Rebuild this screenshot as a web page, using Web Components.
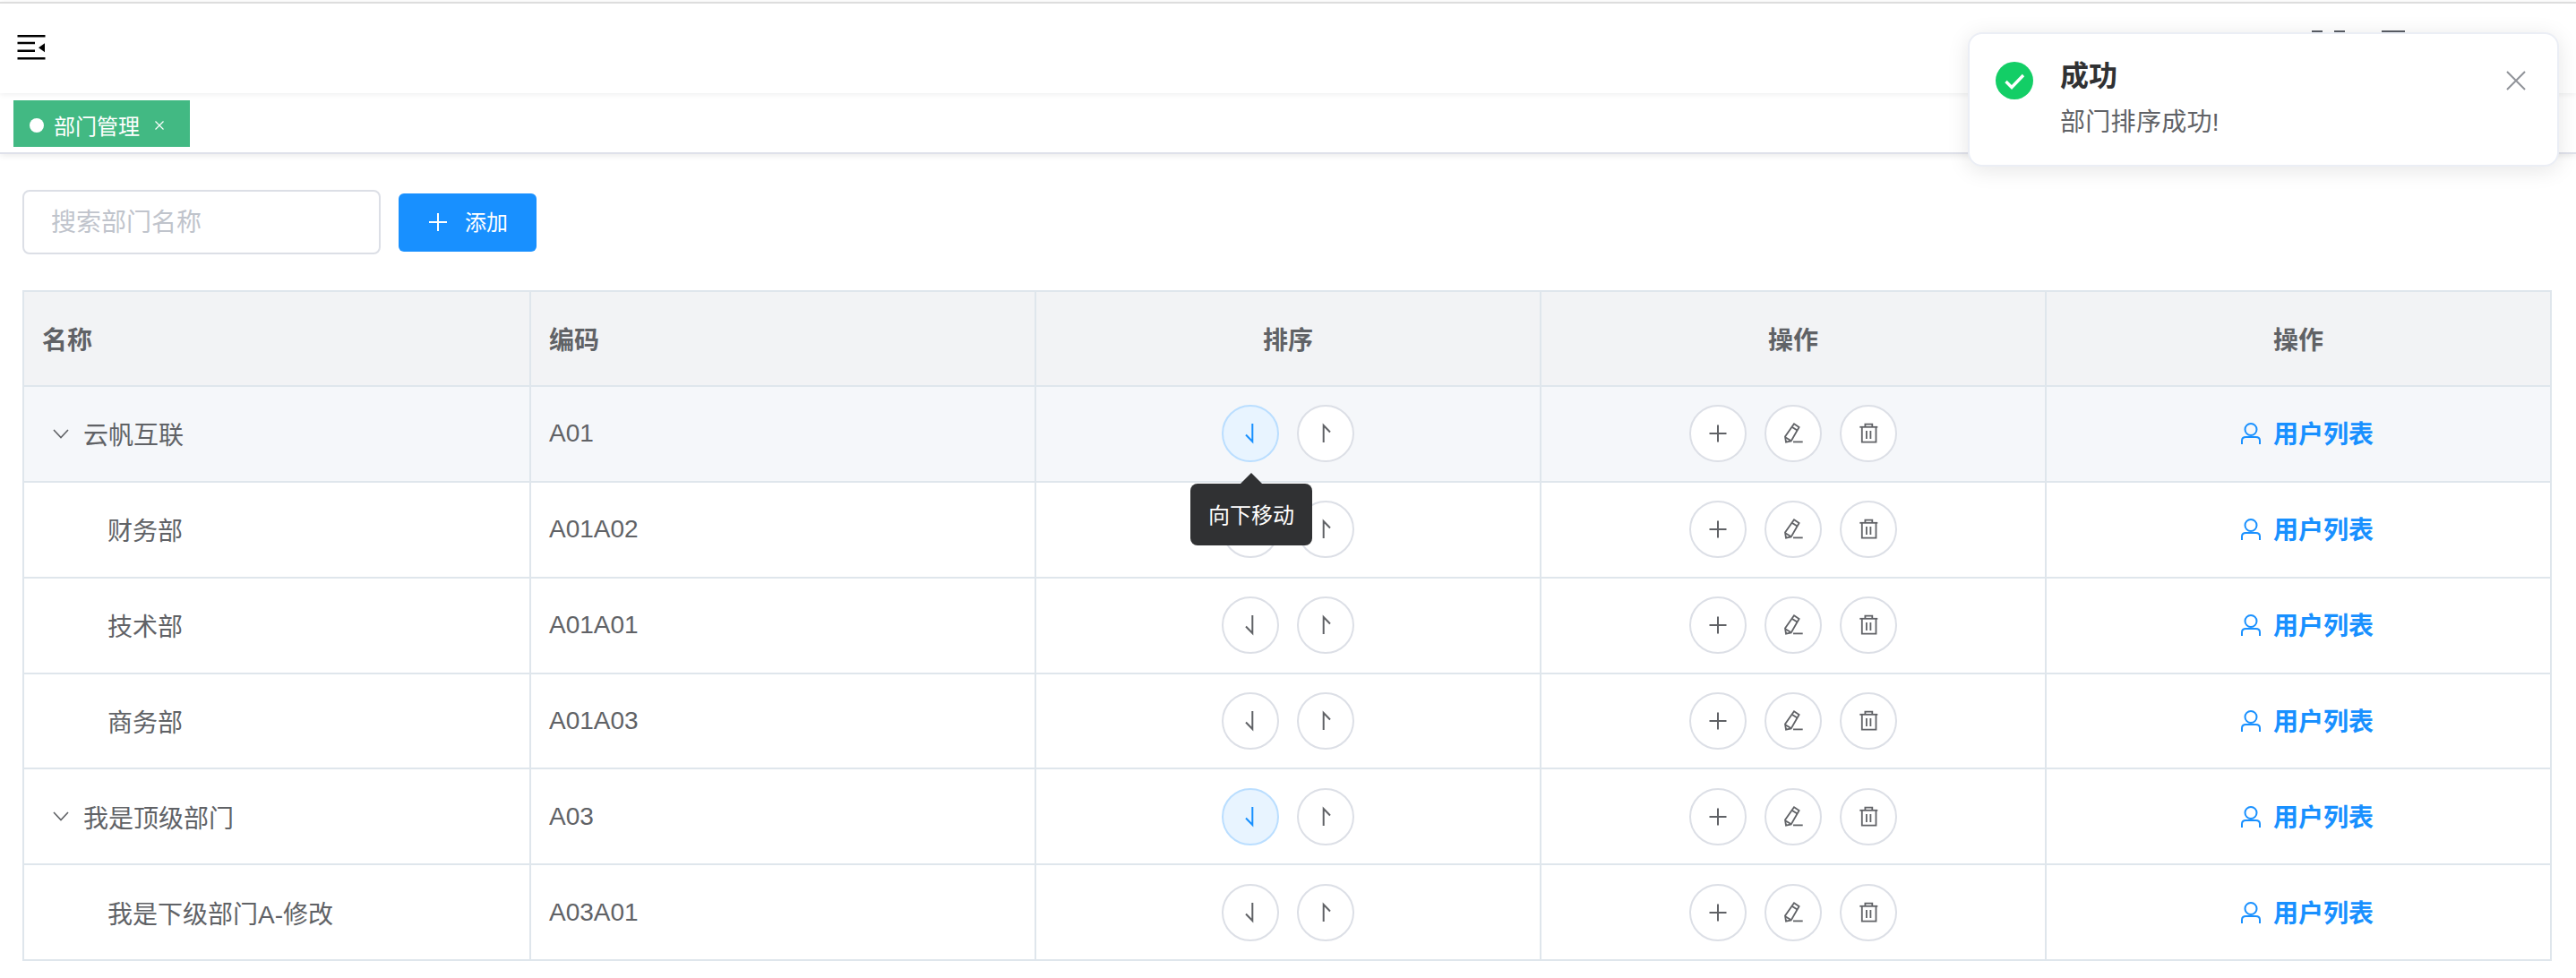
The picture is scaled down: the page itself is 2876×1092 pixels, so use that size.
<!DOCTYPE html>
<html lang="zh"><head><meta charset="utf-8"><style>
html,body{margin:0;padding:0;background:#fff}
body{width:2876px;height:1092px;overflow:hidden;position:relative;font-family:"Liberation Sans","Noto Sans CJK SC",sans-serif;color:#606266;font-size:28px}
</style></head><body>
<app-nav></app-nav>
<app-tags></app-tags>
<app-main></app-main>
<app-tooltip>向下移动</app-tooltip>
<app-notify title-text="成功" message="部门排序成功!"></app-notify>
<script>
const ICONS={
 down:'<path d="M18.3 5V25L11 17.5" fill="none" stroke="currentColor" stroke-width="2"/>',
 up:'<path d="M13.7 26V7L21 14.5" fill="none" stroke="currentColor" stroke-width="2"/>',
 plus:'<path d="M16 6.5V25.5M6.5 16H25.5" fill="none" stroke="currentColor" stroke-width="2"/>',
 edit:'<g fill="none" stroke="currentColor" stroke-width="1.8"><path d="M17 5.3L22.6 9L13.7 24.5L8 25.6L7 19.5Z"/><path d="M15 9L20.5 12.6"/><path d="M7.6 20.4L13.4 24"/><path d="M16 25.4H26.7"/></g>',
 del:'<g fill="none" stroke="currentColor" stroke-width="1.8"><path d="M6.3 8.8H26.3"/><path d="M12.4 8.8V5.6H20.3V8.8"/><path d="M8.8 8.8V25.6H24.5V8.8"/><path d="M13.9 13V22M18.4 13V22"/></g>'
};
class AppNav extends HTMLElement{constructor(){super();this.attachShadow({mode:'open'}).innerHTML=`<style>
:host{display:flex;align-items:center;height:100px;border-top:2px solid #ddd;margin-top:2px;padding-left:19px;background:#fff;position:relative;z-index:1;box-shadow:0 1px 6px rgba(0,21,41,.08)}
svg{display:block;margin-top:-2px}
.r{margin-left:auto;display:flex;margin-right:191px;align-self:flex-start;padding-top:30px}
.r span{display:block;height:2px;background:#5a5e66}
</style><svg width="32" height="28" viewBox="0 0 32 28"><path d="M0.5 1.2H31.5M0.5 9H20M0.5 17.8H20M0.5 26.2H31.5" stroke="#000" stroke-width="2.4" fill="none"/><path d="M31 9.3V19.3L24 14.3Z" fill="#000"/></svg><div class="r"><span style="width:12px;margin-right:13px"></span><span style="width:12px;margin-right:41px"></span><span style="width:26px"></span></div>`}}
customElements.define('app-nav',AppNav);
class AppTags extends HTMLElement{constructor(){super();this.attachShadow({mode:'open'}).innerHTML=`<style>
:host{display:flex;align-items:flex-start;height:66px;box-sizing:border-box;padding:8px 0 0 15px;background:#fff;box-shadow:0 2px 0 #dfe1ea,0 3px 8px rgba(0,0,0,.1);position:relative}
.tag{display:flex;align-items:center;height:52px;width:197px;box-sizing:border-box;background:#42b983;color:#fff;font-size:24px;padding:2px 0 0 18px}
.dot{width:16px;height:16px;border-radius:50%;background:#fff;margin:2px 11px 0 0;flex:none}
svg{margin:2px 0 0 16px;display:block}
</style><div class="tag"><span class="dot"></span><span>部门管理</span><svg width="12" height="12" viewBox="0 0 12 12"><path d="M1.5 1.5L10.5 10.5M10.5 1.5L1.5 10.5" stroke="#fff" stroke-width="1.2" fill="none"/></svg></div>`}}
customElements.define('app-tags',AppTags);
class AppMain extends HTMLElement{constructor(){super();this.attachShadow({mode:'open'}).innerHTML=`<style>
:host{display:block;padding:42px 26px 0 25px}
.bar{display:flex;align-items:center;gap:20px;height:72px;margin-bottom:40px}
</style><div class="bar"><app-search placeholder="搜索部门名称"></app-search><app-add>添加</app-add></div><app-table></app-table>`}}
customElements.define('app-main',AppMain);
class AppSearch extends HTMLElement{constructor(){super();this.attachShadow({mode:'open'}).innerHTML=`<style>
:host{display:block}
input{display:block;width:400px;height:72px;box-sizing:border-box;border:2px solid #dcdfe6;border-radius:8px;padding:2px 30px 0;font:28px "Liberation Sans","Noto Sans CJK SC",sans-serif;outline:0;background:#fff}
input::placeholder{color:#c0c4cc;opacity:1}
</style><input placeholder="${this.getAttribute('placeholder')}">`}}
customElements.define('app-search',AppSearch);
class AppAdd extends HTMLElement{constructor(){super();this.attachShadow({mode:'open'}).innerHTML=`<style>
:host{display:flex;align-items:center;height:65px;width:154px;box-sizing:border-box;padding-left:34px;background:#1890ff;color:#fff;border-radius:6px;font-size:24px}
svg{margin-right:20px;display:block}
span{margin-top:-3px}
</style><svg width="20" height="20" viewBox="0 0 20 20"><path d="M10 0V20M0 10H20" stroke="#fff" stroke-width="2" fill="none"/></svg><span><slot></slot></span>`}}
customElements.define('app-add',AppAdd);
class AppTable extends HTMLElement{constructor(){super();
 const rows=[['云帆互联','A01',0],['财务部','A01A02',1],['技术部','A01A01',1],['商务部','A01A03',1],['我是顶级部门','A03',0],['我是下级部门A-修改','A03A01',1]];
 const activeDown=[0,4];
 this.attachShadow({mode:'open'}).innerHTML=`<style>
:host{display:block;border-top:2px solid #dfe6ec;border-left:2px solid #dfe6ec;width:2824px;box-sizing:border-box}
</style><app-row head></app-row>`+rows.map((r,i)=>`<app-row name="${r[0]}" code="${r[1]}" child="${r[2]}" ${i==0?'hover':''} ${activeDown.includes(i)?'active':''}></app-row>`).join('')}}
class AppRow extends HTMLElement{constructor(){super();
 const head=this.hasAttribute('head');const hover=this.hasAttribute('hover');const active=this.hasAttribute('active');
 const circ=(n,a)=>`<app-circle icon="${n}" ${a?'active':''}></app-circle>`;
 const nm=this.getAttribute('name'),code=this.getAttribute('code'),child=this.getAttribute('child')=='1';
 const cells=head?`<div class="c h">名称</div><div class="c h">编码</div><div class="c h m">排序</div><div class="c h m">操作</div><div class="c h m">操作</div>`:
 `<div class="c">${child?'<span class="ind"></span>':'<svg class="chev" width="18" height="11" viewBox="0 0 18 11"><path d="M1 1L9 9.5L17 1" fill="none" stroke="#606266" stroke-width="1.6"/></svg>'}<span>${nm}</span></div><div class="c">${code}</div><div class="c m g">${circ('down',active)}${circ('up')}</div><div class="c m g">${circ('plus')}${circ('edit')}${circ('del')}</div><div class="c m lk"><svg width="22" height="24" viewBox="0 0 22 24" fill="none" stroke="#1890ff" stroke-width="2"><circle cx="11" cy="7.5" r="6.5"/><path d="M1 24V20C1 17.5 3 16 5.5 16H16.5C19 16 21 17.5 21 20V24"/></svg><span>用户列表</span></div>`;
 this.attachShadow({mode:'open'}).innerHTML=`<style>
:host{display:grid;grid-template-columns:566px repeat(4,564px);height:${head?106:106.85}px;box-sizing:border-box;border-bottom:2px solid #dfe6ec;background:${hover?'#f5f7fa':'#fff'}}
.c{display:flex;align-items:center;box-sizing:border-box;padding-left:20px;border-right:2px solid #dfe6ec;min-width:0;color:#606266}
.h{background:#f2f3f5;color:#606266;font-weight:700}
.m{justify-content:center;padding-left:0}
.g{gap:20px}
.ind{display:inline-block;width:73px;flex:none}
.chev{margin:0 16px 0 12px;flex:none;display:block}
.lk{color:#1890ff;gap:14px;padding-left:20px}
.lk svg{display:block;flex:none}
.lk span{font-weight:700;margin-top:-2px}
</style>${cells}`}}
customElements.define('app-table',AppTable);
customElements.define('app-row',AppRow);
class AppCircle extends HTMLElement{constructor(){super();const a=this.hasAttribute('active');this.attachShadow({mode:'open'}).innerHTML=`<style>
:host{display:flex;align-items:center;justify-content:center;width:64px;height:64px;box-sizing:border-box;border-radius:50%;border:2px solid ${a?'#badeff':'#dcdfe6'};background:${a?'#e8f4ff':'#fff'};color:${a?'#1890ff':'#606266'}}
svg{display:block}
</style><svg width="32" height="32" viewBox="0 0 32 32">${ICONS[this.getAttribute('icon')]}</svg>`}}
customElements.define('app-circle',AppCircle);
class AppTooltip extends HTMLElement{constructor(){super();this.attachShadow({mode:'open'}).innerHTML=`<style>
:host{position:absolute;left:1329px;top:540px;width:136px;height:69px;display:flex;align-items:center;justify-content:center;background:#303133;color:#fff;border-radius:8px;font-size:24px;box-sizing:border-box;padding-bottom:3px;z-index:2}
.a{position:absolute;left:56px;top:-12px;width:0;height:0;border-left:12px solid transparent;border-right:12px solid transparent;border-bottom:12px solid #303133}
</style><span class="a"></span><slot></slot>`}}
customElements.define('app-tooltip',AppTooltip);
class AppNotify extends HTMLElement{constructor(){super();this.attachShadow({mode:'open'}).innerHTML=`<style>
:host{position:absolute;left:2197px;top:36px;width:660px;height:150px;box-sizing:border-box;background:#fff;border:2px solid #ebeef5;border-radius:16px;box-shadow:0 4px 24px rgba(0,0,0,.1);display:flex;padding:26px 26px 0 29px;z-index:3}
.i{width:42px;height:42px;border-radius:50%;background:#13ce66;margin:5px 30px 0 0;flex:none;display:flex;align-items:center;justify-content:center}
.i svg{display:block}
.t{font-size:32px;font-weight:700;color:#303133;line-height:42px}
.m{font-size:28px;color:#606266;line-height:42px;margin-top:10px;letter-spacing:.3px}
.x{position:absolute;right:35px;top:41px;display:block}
</style><span class="i"><svg width="24" height="24" viewBox="0 0 24 24"><path d="M2.5 13L9 19.5L22 6" fill="none" stroke="#fff" stroke-width="3.4"/></svg></span><div><div class="t">${this.getAttribute('title-text')}</div><div class="m">${this.getAttribute('message')}</div></div><svg class="x" width="22" height="22" viewBox="0 0 22 22"><path d="M1 1L21 21M21 1L1 21" stroke="#909399" stroke-width="2" fill="none"/></svg>`}}
customElements.define('app-notify',AppNotify);
</script>
</body></html>
